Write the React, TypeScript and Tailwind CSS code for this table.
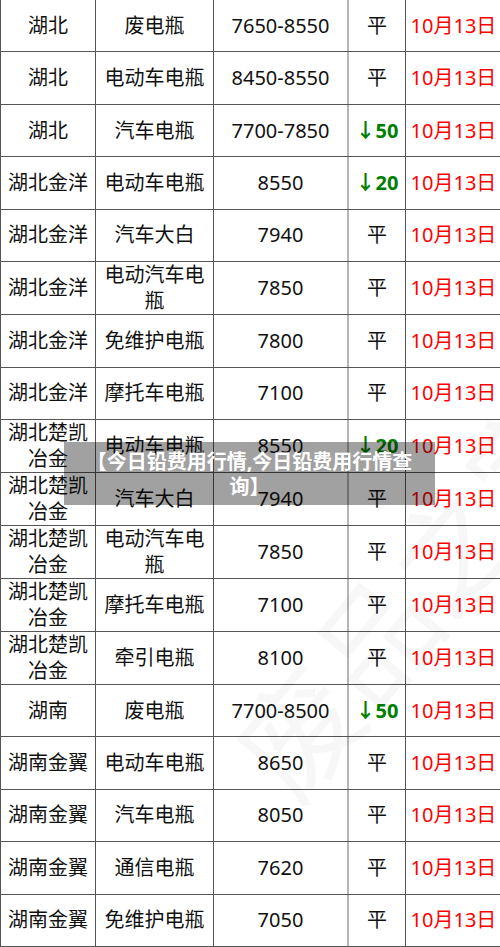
import React from "react";

type Row = [string, string, string, string];

const rows: Row[] = [
  ["湖北", "废电瓶", "7650-8550", "平"],
  ["湖北", "电动车电瓶", "8450-8550", "平"],
  ["湖北", "汽车电瓶", "7700-7850", "↓50"],
  ["湖北金洋", "电动车电瓶", "8550", "↓20"],
  ["湖北金洋", "汽车大白", "7940", "平"],
  ["湖北金洋", "电动汽车电瓶", "7850", "平"],
  ["湖北金洋", "免维护电瓶", "7800", "平"],
  ["湖北金洋", "摩托车电瓶", "7100", "平"],
  ["湖北楚凯冶金", "电动车电瓶", "8550", "↓20"],
  ["湖北楚凯冶金", "汽车大白", "7940", "平"],
  ["湖北楚凯冶金", "电动汽车电瓶", "7850", "平"],
  ["湖北楚凯冶金", "摩托车电瓶", "7100", "平"],
  ["湖北楚凯冶金", "牵引电瓶", "8100", "平"],
  ["湖南", "废电瓶", "7700-8500", "↓50"],
  ["湖南金翼", "电动车电瓶", "8650", "平"],
  ["湖南金翼", "汽车电瓶", "8050", "平"],
  ["湖南金翼", "通信电瓶", "7620", "平"],
  ["湖南金翼", "免维护电瓶", "7050", "平"],
];

const font = { fontFamily: '"Noto Sans", "Noto Sans CJK SC", sans-serif' };

export default function App() {
  return (
    <div
      className="relative w-[500px] h-[947px] overflow-hidden bg-white text-[20px] text-[#111]"
      style={font}
    >
      <div className="grid grid-rows-[repeat(18,1fr)] h-[947px] border-l border-[#555]">
        {rows.map((r, i) => (
          <div
            key={i}
            className="grid grid-cols-[95px_118px_135px_57px_95px] border-b border-[#555]"
          >
            <div className="flex items-center justify-center text-center leading-[26px] border-r border-[#555] px-[2px]">
              <span className="max-w-[84px]">{r[0]}</span>
            </div>
            <div className="flex items-center justify-center text-center leading-[26px] border-r border-[#555] px-[2px]">
              <span className="max-w-[104px]">{r[1]}</span>
            </div>
            <div className="flex items-center justify-center border-r-2 border-[#b5b5b5]">
              {r[2]}
            </div>
            <div className="flex items-center justify-center border-r border-[#555]">
              {r[3] === "平" ? (
                <span>平</span>
              ) : (
                <span className="font-bold text-[#008000]">{r[3]}</span>
              )}
            </div>
            <div className="flex items-center justify-center text-[#ff0000]">
              10月13日
            </div>
          </div>
        ))}
      </div>

      <div
        className="pointer-events-none absolute left-[170px] top-[500px] -rotate-[50deg] text-[120px] text-black/[0.03] whitespace-nowrap"
        style={{ fontFamily: '"Noto Sans CJK SC", sans-serif' }}
      >
        废品之家
      </div>

      <div className="absolute left-[64px] top-[442px] w-[371px] h-[63px] bg-black/[0.37] flex items-center justify-center">
        <div className="w-[342px] text-white font-bold text-[20px] leading-[25px] text-center">
          【今日铅费用行情,今日铅费用行情查询】
        </div>
      </div>
    </div>
  );
}
